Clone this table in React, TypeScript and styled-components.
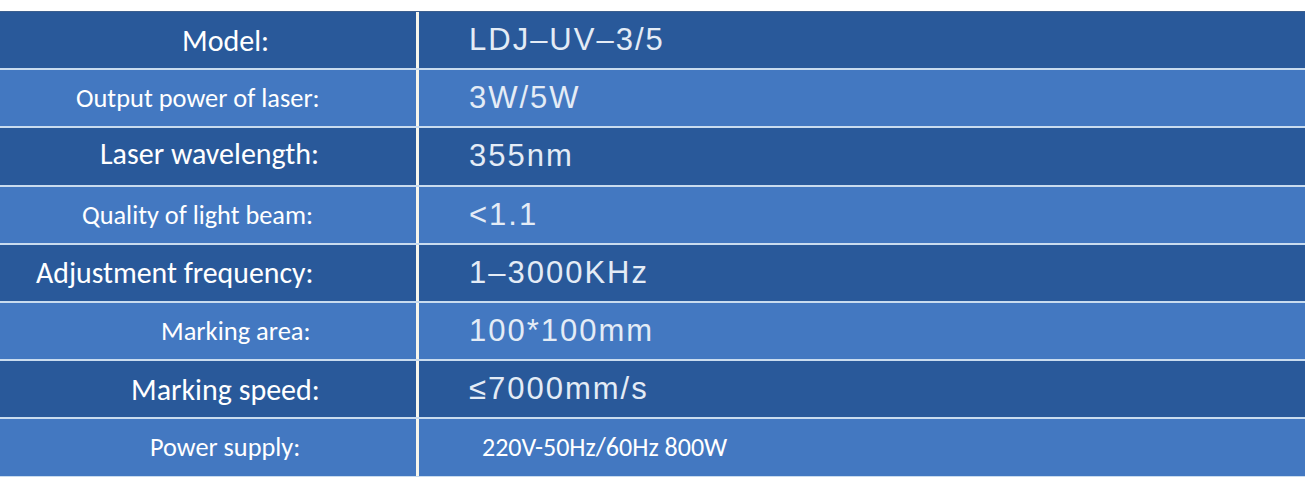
import React from "react";
import styled, { createGlobalStyle } from "styled-components";

const Global = createGlobalStyle`
  html, body { margin: 0; padding: 0; background: #ffffff; }
  #root { width: 1314px; height: 478px; overflow: hidden; }
`;

const Table = styled.div`
  margin-top: 11px;
  width: 1305px;
  display: grid;
  grid-template-columns: 1fr;
  grid-auto-rows: 56.2px;
  row-gap: 2px;
  background: #c9dcef;
  border-top: 1px solid #3c5f8e;
  border-bottom: 1px solid #c9dcef;
`;

const Row = styled.div<{ $dark: boolean }>`
  display: grid;
  grid-template-columns: 419px 1fr;
  background: ${(p) => (p.$dark ? "#29599a" : "#4378c1")};
`;

const Label = styled.div<{ $size: number; $indent: number; $nudge: number }>`
  display: flex;
  align-items: center;
  padding-left: ${(p) => p.$indent}px;
  padding-bottom: ${(p) => p.$nudge * 2}px;
  border-right: 3px solid #f7f6ec;
  font-family: Carlito, Lato, "Open Sans", sans-serif;
  font-size: ${(p) => p.$size}px;
  color: #ffffff;
  white-space: nowrap;
`;

const Value = styled.div<{ $plain?: boolean }>`
  display: flex;
  align-items: center;
  padding-left: ${(p) => (p.$plain ? 63 : 50)}px;
  font-family: ${(p) =>
    p.$plain ? 'Carlito, Lato, "Open Sans", sans-serif' : '"Liberation Sans", Arial, sans-serif'};
  font-size: ${(p) => (p.$plain ? 26 : 31)}px;
  letter-spacing: ${(p) => (p.$plain ? 0 : 2)}px;
  color: ${(p) => (p.$plain ? "#ffffff" : "#e4ecf6")};
  white-space: nowrap;
`;

type Spec = {
  label: string;
  size: number;
  indent: number;
  nudge: number;
  value: string;
  plain?: boolean;
};

const rows: Spec[] = [
  { label: "Model:", size: 30, indent: 182, nudge: 0, value: "LDJ–UV–3/5" },
  { label: "Output power of laser:", size: 26.4, indent: 76, nudge: 0, value: "3W/5W" },
  { label: "Laser wavelength:", size: 30, indent: 100, nudge: 3, value: "355nm" },
  { label: "Quality of light beam:", size: 26.3, indent: 82, nudge: -2, value: "<1.1" },
  { label: "Adjustment frequency:", size: 29.8, indent: 36, nudge: -1, value: "1–3000KHz" },
  { label: "Marking area:", size: 26.5, indent: 161, nudge: -1, value: "100*100mm" },
  { label: "Marking speed:", size: 30, indent: 131, nudge: -2, value: "≤7000mm/s" },
  { label: "Power supply:", size: 26.3, indent: 150, nudge: 0, value: "220V-50Hz/60Hz 800W", plain: true },
];

export default function App() {
  return (
    <>
      <Global />
      <Table>
        {rows.map((r, i) => (
          <Row key={r.label} $dark={i % 2 === 0}>
            <Label $size={r.size} $indent={r.indent} $nudge={r.nudge}>
              {r.label}
            </Label>
            <Value $plain={r.plain}>{r.value}</Value>
          </Row>
        ))}
      </Table>
    </>
  );
}
